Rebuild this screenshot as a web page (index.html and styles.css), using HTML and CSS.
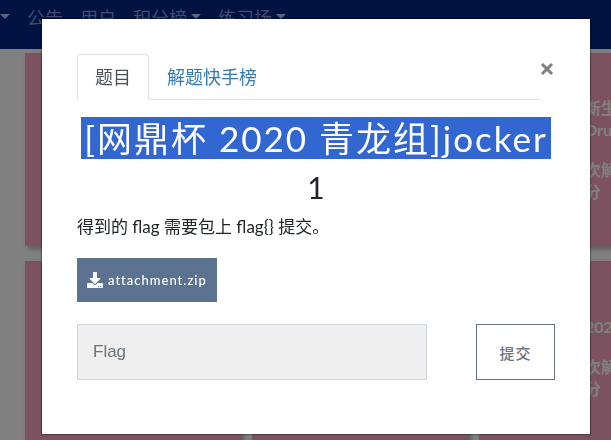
FILE: index.html
```html
<!DOCTYPE html>
<html lang="zh-CN">
<head>
    <meta charset="UTF-8">
    <meta name="viewport" content="width=device-width, initial-scale=1.0">
    <title>Challenges</title>
    <link rel="stylesheet" href="styles.css">
</head>
<body>
    <nav class="navbar">
        <a href="#" class="nav-item"><span class="caret"></span></a>
        <a href="#" class="nav-item">公告</a>
        <a href="#" class="nav-item">用户</a>
        <a href="#" class="nav-item">积分榜<span class="caret"></span></a>
        <a href="#" class="nav-item">练习场<span class="caret"></span></a>
    </nav>

    <main class="challenges">
        <div class="card"></div>
        <div class="card"></div>
        <div class="card">
            <p class="card-name">新生<br>Dru</p>
            <p class="card-info">次解<br>分</p>
        </div>
        <div class="card"></div>
        <div class="card"></div>
        <div class="card">
            <p class="card-name">202</p>
            <p class="card-info">次解<br>分</p>
        </div>
    </main>

    <div class="overlay">
        <div class="modal" role="dialog" aria-labelledby="challenge-name">
            <div class="modal-top">
                <div class="tabs">
                    <button class="tab active" type="button">题目</button>
                    <button class="tab" type="button">解题快手榜</button>
                </div>
                <button class="close" type="button" aria-label="Close">
                    <svg width="14" height="14" viewBox="0 0 14 14">
                        <path d="M2 2l10 10M12 2L2 12" stroke="#808080" stroke-width="3" fill="none"/>
                    </svg>
                </button>
            </div>

            <h2 class="challenge-name" id="challenge-name"><span class="selected">[网鼎杯 2020 青龙组]jocker</span></h2>
            <h3 class="challenge-value">1</h3>
            <p class="challenge-desc">得到的 flag 需要包上 flag{} 提交。</p>

            <a href="#" class="file-btn">
                <svg width="16" height="16" viewBox="0 0 512 512" fill="currentColor">
                    <path d="M216 0h80c13.300 0 24 10.700 24 24v168h87.700c17.800 0 26.700 21.500 14.100 34.100L269.700 378.300c-7.500 7.500-19.800 7.500-27.300 0L90.100 226.100c-12.600-12.600-3.700-34.100 14.100-34.100H192V24c0-13.300 10.700-24 24-24zm296 376v112c0 13.300-10.700 24-24 24H24c-13.300 0-24-10.700-24-24V376c0-13.300 10.700-24 24-24h146.700l49 49c20.100 20.100 52.500 20.100 72.600 0l49-49H488c13.300 0 24 10.700 24 24zm-124 88c0-11-9-20-20-20s-20 9-20 20 9 20 20 20 20-9 20-20zm64 0c0-11-9-20-20-20s-20 9-20 20 9 20 20 20 20-9 20-20z"/>
                </svg>
                <span>attachment.zip</span>
            </a>

            <form class="submit-row">
                <input class="flag-input" type="text" placeholder="Flag" aria-label="Flag">
                <button class="submit-btn" type="button">提交</button>
            </form>
        </div>
    </div>
</body>
</html>
```
FILE: styles.css
```css
* {
    margin: 0;
    padding: 0;
    box-sizing: border-box;
}

body {
    font-family: Lato, "Noto Sans CJK SC", sans-serif;
    font-size: 18px;
    font-weight: 400;
    color: #212529;
    background: #808080;
    height: 100vh;
    overflow: hidden;
}

.navbar {
    display: flex;
    gap: 17px;
    height: 49px;
    padding-top: 3px;
    background: #001242;
}

.nav-item {
    display: flex;
    align-items: center;
    gap: 4px;
    height: 27px;
    color: #404d71;
    font-weight: 400;
    text-decoration: none;
    white-space: nowrap;
}

.caret {
    border-top: 5px solid #596480;
    border-left: 5px solid transparent;
    border-right: 5px solid transparent;
}

.challenges {
    display: grid;
    grid-template-columns: repeat(3, 216px);
    grid-auto-rows: 193px;
    gap: 15px 11px;
    padding: 4px 0 0 25px;
    overflow: hidden;
}

.card {
    padding: 44px 0 0 106px;
    background: #7d5260;
    box-shadow: 3px 3px 5px rgba(0, 0, 0, 0.3);
    color: #808080;
    font-size: 16px;
    font-weight: 700;
    line-height: 22px;
    white-space: nowrap;
}

.card-name {
    margin-bottom: 18px;
}

.card:last-child {
    padding-top: 55px;
}

.overlay {
    position: fixed;
    inset: 0;
    padding: 19px 21px 0 42px;
}

.modal {
    padding: 35px 35px 54px;
    background: white;
    box-shadow: 0 0 1px 1px rgba(0, 0, 0, 0.3);
}

.modal-top {
    display: flex;
    align-items: flex-start;
}

.tabs {
    display: flex;
    flex: 1;
    height: 46px;
    border-bottom: 1px solid #dee2e6;
}

.tab {
    height: 46px;
    padding: 0 17px 2px;
    border: 1px solid transparent;
    border-radius: 4px 4px 0 0;
    background: none;
    color: #337ab7;
    font-family: inherit;
    font-size: 18px;
    font-weight: 400;
    cursor: pointer;
}

.tab.active {
    border-color: #dee2e6 #dee2e6 white;
    background: white;
    color: #495057;
}

.close {
    width: 15px;
    height: 30px;
    border: none;
    background: none;
    cursor: pointer;
}

.close svg {
    display: block;
}

.challenge-name {
    margin-top: 17px;
    font-size: 35px;
    font-weight: 400;
    line-height: 42px;
    letter-spacing: 2px;
    text-align: center;
    white-space: nowrap;
}

.selected {
    display: inline-block;
    padding: 0 3px;
    background: #3267d1;
    color: white;
}

.challenge-value {
    margin-top: 8px;
    font-size: 30px;
    font-weight: 400;
    line-height: 40px;
    text-align: center;
}

.challenge-desc {
    margin-top: 6px;
    font-size: 17px;
    line-height: 28px;
}

.file-btn {
    display: inline-flex;
    align-items: center;
    gap: 5px;
    height: 44px;
    margin-top: 17px;
    padding: 0 10px;
    background: #5b7290;
    color: white;
    font-size: 13px;
    font-weight: 500;
    letter-spacing: 1px;
    text-decoration: none;
}

.submit-row {
    display: flex;
    justify-content: space-between;
    gap: 49px;
    margin-top: 22px;
}

.flag-input {
    flex: 1;
    min-width: 0;
    height: 56px;
    padding: 0 15px;
    border: 1px solid #ced4da;
    background: #efefef;
    font-family: "Liberation Sans", Arial, sans-serif;
    font-size: 17px;
}

.flag-input::placeholder {
    color: #6c757d;
}

.submit-btn {
    width: 79px;
    height: 56px;
    border: 1px solid #6c757d;
    background: white;
    color: #6c757d;
    font-family: inherit;
    font-size: 15px;
    font-weight: 500;
    letter-spacing: 1px;
    cursor: pointer;
}
```
